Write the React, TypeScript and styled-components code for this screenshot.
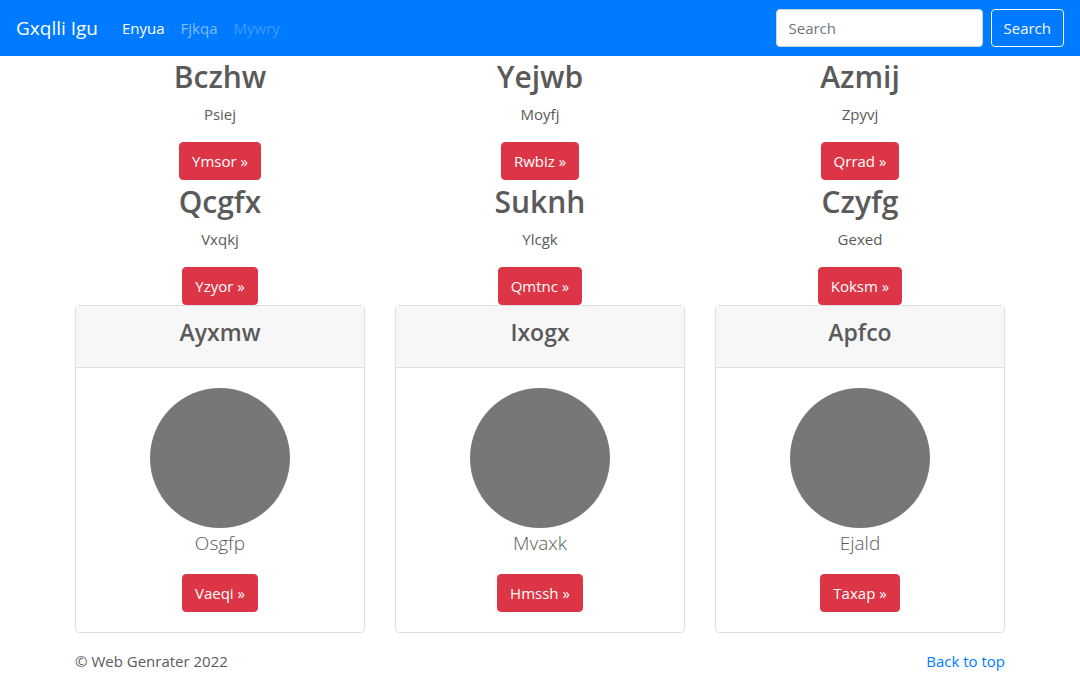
import React from "react";
import styled, { createGlobalStyle } from "styled-components";

const GlobalStyle = createGlobalStyle`
  *, *::before, *::after { box-sizing: border-box; }
  body {
    margin: 0;
    background: #fff;
    color: #5a5a5a;
    font: 400 15px/24px "Segoe UI", "Open Sans", "Noto Sans", sans-serif;
  }
  h1, h2, h4, p, ul { margin: 0; }
  a { color: #007bff; text-decoration: none; }
`;

const Navbar = styled.nav`
  display: flex;
  align-items: center;
  height: 56px;
  padding: 0 16px;
  background: #007bff;
`;

const Brand = styled.a`
  margin-right: 16px;
  color: #fff;
  font-size: 19px;
  line-height: 30px;
`;

const NavList = styled.ul`
  display: flex;
  flex: 1;
  padding: 0;
  list-style: none;
`;

const NavLink = styled.a<{ $tone: string }>`
  display: block;
  padding: 8px;
  color: ${({ $tone }) => $tone};
`;

const SearchForm = styled.form`
  display: flex;
  gap: 8px;
`;

const SearchInput = styled.input`
  width: 207px;
  height: 38px;
  padding: 6px 12px;
  border: 1px solid #ced4da;
  border-radius: 4px;
  background: #fff;
  color: #495057;
  font: inherit;
  &::placeholder { color: #6c757d; opacity: 1; }
`;

const SearchButton = styled.button`
  height: 38px;
  padding: 0 12px;
  border: 1px solid #f8f9fa;
  border-radius: 4px;
  background: transparent;
  color: #f8f9fa;
  font: inherit;
`;

const Container = styled.main`
  max-width: 960px;
  margin: 0 auto;
  padding: 0 15px;
`;

const Grid = styled.section`
  display: grid;
  grid-template-columns: repeat(3, 1fr);
  gap: 1px 30px;
  text-align: center;
`;

const Feature = styled.article`
  padding-top: 2px;
`;

const FeatureTitle = styled.h2`
  margin-bottom: 6px;
  font-size: 30px;
  font-weight: 600;
  line-height: 38px;
`;

const FeatureText = styled.p`
  margin-bottom: 16px;
`;

const ActionButton = styled.a`
  display: inline-block;
  padding: 6px 12px;
  border: 1px solid #dc3545;
  border-radius: 4px;
  background: #dc3545;
  color: #fff;
  vertical-align: top;
`;

const Card = styled.article`
  border: 1px solid #dfdfdf;
  border-radius: 4px;
`;

const CardHeader = styled.header`
  padding: 12px 20px;
  border-bottom: 1px solid #dfdfdf;
  border-radius: 3px 3px 0 0;
  background: #f7f7f7;
`;

const CardTitle = styled.h4`
  margin-bottom: 8px;
  font-size: 23px;
  font-weight: 600;
  line-height: 29px;
`;

const CardBody = styled.div`
  padding: 20px;
`;

const Portrait = styled.svg`
  display: block;
  margin: 0 auto;
`;

const Lead = styled.p`
  margin-bottom: 16px;
  font-size: 19px;
  font-weight: 300;
  line-height: 30px;
`;

const Footer = styled.footer`
  display: flex;
  justify-content: space-between;
  padding-top: 16px;
`;

const features = [
  ["Bczhw", "Psiej", "Ymsor"],
  ["Yejwb", "Moyfj", "Rwbiz"],
  ["Azmij", "Zpyvj", "Qrrad"],
  ["Qcgfx", "Vxqkj", "Yzyor"],
  ["Suknh", "Ylcgk", "Qmtnc"],
  ["Czyfg", "Gexed", "Koksm"],
];

const cards = [
  ["Ayxmw", "Osgfp", "Vaeqi"],
  ["Ixogx", "Mvaxk", "Hmssh"],
  ["Apfco", "Ejald", "Taxap"],
];

export default function App() {
  return (
    <>
      <GlobalStyle />
      <Navbar>
        <Brand href="#">Gxqlli Igu</Brand>
        <NavList>
          <li><NavLink href="#" $tone="#fff">Enyua</NavLink></li>
          <li><NavLink href="#" $tone="rgba(255,255,255,.5)">Fjkqa</NavLink></li>
          <li><NavLink href="#" $tone="rgba(255,255,255,.25)">Mywry</NavLink></li>
        </NavList>
        <SearchForm>
          <SearchInput type="search" placeholder="Search" aria-label="Search" />
          <SearchButton type="button">Search</SearchButton>
        </SearchForm>
      </Navbar>
      <Container>
        <Grid>
          {features.map(([title, text, action]) => (
            <Feature key={title}>
              <FeatureTitle>{title}</FeatureTitle>
              <FeatureText>{text}</FeatureText>
              <ActionButton href="#">{action} »</ActionButton>
            </Feature>
          ))}
        </Grid>
        <Grid>
          {cards.map(([title, text, action]) => (
            <Card key={title}>
              <CardHeader><CardTitle>{title}</CardTitle></CardHeader>
              <CardBody>
                <Portrait width="140" height="140" viewBox="0 0 140 140" aria-hidden="true">
                  <circle cx="70" cy="70" r="70" fill="#777" />
                </Portrait>
                <Lead>{text}</Lead>
                <ActionButton href="#">{action} »</ActionButton>
              </CardBody>
            </Card>
          ))}
        </Grid>
        <Footer>
          <p>© Web Genrater 2022</p>
          <a href="#">Back to top</a>
        </Footer>
      </Container>
    </>
  );
}
